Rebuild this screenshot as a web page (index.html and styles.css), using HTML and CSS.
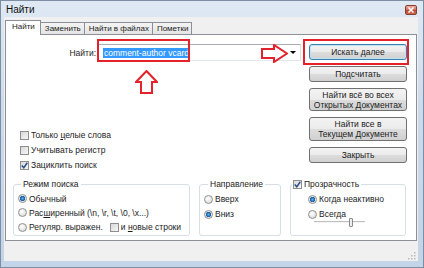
FILE: index.html
```html
<!DOCTYPE html>
<html lang="ru">
<head>
<meta charset="utf-8">
<title>Найти</title>
<link rel="stylesheet" href="styles.css">
</head>
<body>
<div class="window">
  <div class="titlebar">
    <span class="title">Найти</span>
    <span class="close"><svg width="10" height="8" viewBox="0 0 10 8"><path d="M2.5 1.5 L7.5 6.5 M7.5 1.5 L2.5 6.5" stroke="#fff" stroke-width="1.6"/></svg></span>
  </div>
  <div class="client">
    <div class="tabs">
      <div class="tab active">Найти</div>
      <div class="tab">Заменить</div>
      <div class="tab">Найти в файлах</div>
      <div class="tab">Пометки</div>
    </div>
    <div class="page">
      <div class="top">
        <div class="left">
          <div class="findrow">
            <span class="findlabel">Найти:</span>
            <div class="combo"><span class="sel">comment-author vcard</span><span class="drop"></span></div>
          </div>
          <div class="checks">
            <div class="check"><span class="cb"></span><span>Только <u>ц</u>елые слова</span></div>
            <div class="check"><span class="cb"></span><span>Учитывать регистр</span></div>
            <div class="check"><span class="cb"><svg width="7" height="7" viewBox="0 0 7 7"><path d="M0.8 3.6 L2.8 5.8 L6.3 0.8" fill="none" stroke="#2b4f86" stroke-width="1.5"/></svg></span><span>Зациклить поиск</span></div>
          </div>
        </div>
        <div class="buttons">
          <div class="btn default">Искать далее</div>
          <div class="btn">Подсчитать</div>
          <div class="btn tall">Найти всё во всех<br>Открытых Документах</div>
          <div class="btn tall">Найти все в<br>Текущем Документе</div>
          <div class="btn">Закрыть</div>
        </div>
      </div>
      <div class="groups">
        <fieldset class="group g1">
          <legend>Режим поиска</legend>
          <div class="opt"><span class="radio on"></span><span>Обычный</span></div>
          <div class="opt"><span class="radio"></span><span>Рас<u>ш</u>иренный (\n, \r, \t, \0, \x...)</span></div>
          <div class="opt"><span class="radio"></span><span>Регуляр. выражен.</span><span class="cb nl"></span><span>и <u>н</u>овые строки</span></div>
        </fieldset>
        <fieldset class="group g2">
          <legend>Направление</legend>
          <div class="opt"><span class="radio"></span><span>Вверх</span></div>
          <div class="opt"><span class="radio on"></span><span>Вниз</span></div>
        </fieldset>
        <fieldset class="group g3">
          <legend><span class="cb"><svg width="7" height="7" viewBox="0 0 7 7"><path d="M0.8 3.6 L2.8 5.8 L6.3 0.8" fill="none" stroke="#2b4f86" stroke-width="1.5"/></svg></span><span>Прозрачность</span></legend>
          <div class="opt"><span class="radio on"></span><span>Когда неактивно</span></div>
          <div class="opt"><span class="radio"></span><span>Всегда</span></div>
          <div class="slider"><span class="track a"></span><span class="thumb"></span><span class="track b"></span></div>
        </fieldset>
      </div>
      <div class="mark box1"></div>
      <div class="mark box2"></div>
      <svg class="arrow right" width="27" height="19" viewBox="0 0 27 19"><polygon points="1,5 13,5 13,1 26,9.5 13,18 13,14 1,14" fill="none" stroke="#e3222b" stroke-width="2" stroke-linejoin="miter"/></svg>
      <svg class="arrow up" width="23" height="24" viewBox="0 0 23 24"><polygon points="11.5,1 22,12 17,12 17,23 6,23 6,12 1,12" fill="none" stroke="#e3222b" stroke-width="2"/></svg>
    </div>
    <div class="footer"><svg class="grip" width="8" height="8" viewBox="0 0 8 8"><g fill="#b9b9b9"><rect x="6" y="0" width="1.5" height="1.5"/><rect x="3" y="3" width="1.5" height="1.5"/><rect x="6" y="3" width="1.5" height="1.5"/><rect x="0" y="6" width="1.5" height="1.5"/><rect x="3" y="6" width="1.5" height="1.5"/><rect x="6" y="6" width="1.5" height="1.5"/></g></svg></div>
  </div>
</div>
</body>
</html>
```
FILE: styles.css
```css
* { box-sizing: border-box; }
html, body { margin: 0; padding: 0; }
body {
  width: 424px; height: 268px; overflow: hidden;
  font-family: "Liberation Sans", Arial, sans-serif;
  font-size: 8.5px; color: #1c1c1c; background: #fff;
}
u { text-decoration: underline; text-underline-offset: 1px; }

.window {
  width: 424px; height: 268px;
  display: flex; flex-direction: column;
  background: linear-gradient(#dfe9f4, #ccdbec 40%, #c3d4e8);
  border: 1px solid #7d8ea3;
  padding: 0 5px 6px 3px;
}
.titlebar {
  height: 16px; flex: none;
  display: flex; align-items: center; justify-content: space-between;
  padding-left: 2px;
}
.title { font-size: 10px; color: #111; }
.close {
  width: 12px; height: 10px; margin-right: 1px; margin-top: 2px;
  border: 1px solid #8d3b2e; border-radius: 2px;
  background: linear-gradient(#eab0a2, #d1705c 45%, #bd4a33 55%, #cc6a4f);
  display: flex; align-items: center; justify-content: center;
}
.close svg { display: block; }

.client {
  flex: 1;
  background: #f0f0f0;
  display: flex; flex-direction: column;
  padding: 3px 1px 0;
}
.tabs {
  height: 14px; flex: none;
  display: flex; align-items: flex-end;
  position: relative; z-index: 1;
  font-size: 8px;
}
.tab {
  height: 12px; padding: 0 3px 0 4px;
  border: 1px solid #8c8f97; border-bottom: none; border-left: none;
  background: linear-gradient(#f4f4f4, #e4e4e4);
  line-height: 11px; white-space: nowrap;
}
.tab.active {
  height: 15px; margin-bottom: -1px;
  border-left: 1px solid #8c8f97;
  background: #fff; padding: 0 5px 0 6px;
  line-height: 12px;
}

.page {
  height: 207px; flex: none;
  background: #fff;
  border: 1px solid #8c8f97;
  position: relative;
  padding: 9px 9px 4px 7px;
  display: flex; flex-direction: column;
}
.top {
  display: grid; grid-template-columns: 1fr 98px; column-gap: 8px;
  height: 128px;
}
.left { display: flex; flex-direction: column; }
.findrow { display: flex; align-items: center; height: 17px; gap: 2px; }
.findlabel { width: 83px; text-align: right; }
.combo {
  flex: 1; height: 17px;
  border: 1px solid #abadb3; border-color: #abadb3 #dbdfe6 #e3e9ef #e2e3ea;
  display: flex; align-items: center; padding: 0 4px 0 4px;
  background: #fff;
}
.sel { background: #3399ff; color: #fff; line-height: 10px; height: 10px; padding: 0 1px; }
.drop {
  margin-left: auto; width: 0; height: 0;
  border-left: 3px solid transparent; border-right: 3px solid transparent;
  border-top: 3px solid #000;
}
.checks { margin-top: 67px; display: flex; flex-direction: column; gap: 1px; padding-left: 7px; }
.check { display: flex; align-items: center; height: 14px; gap: 2px; }
.cb {
  width: 9px; height: 9px; flex: none;
  border: 1px solid #8e8f8f;
  background: linear-gradient(135deg, #d9d9d9, #f6f6f6);
  display: inline-flex; align-items: center; justify-content: center;
}
.cb svg { display: block; }

.buttons { display: flex; flex-direction: column; gap: 6px; }
.btn {
  height: 16px;
  border: 1px solid #707070; border-radius: 3px;
  background: linear-gradient(#f3f3f3 0%, #ebebeb 50%, #dddddd 51%, #d0d0d0 100%);
  display: flex; align-items: center; justify-content: center;
  text-align: center; line-height: 10px;
}
.btn.default { border-color: #3c7fb1; box-shadow: inset 0 0 0 1px #bde3f5; }
.btn.tall { height: 23px; }
.btn.tall + .btn.tall { height: 24px; }

.groups { display: flex; gap: 9px; margin-top: 6px; height: 58px; }
.group {
  margin: 0; padding: 2px 0 0 4px; min-width: 0;
  border: 1px solid #d5dfe5; border-radius: 3px;
  display: flex; flex-direction: column;
}
.group legend { padding: 0 2px; line-height: 12px; }
.g1 { width: 177px; }
.g1 legend { margin-left: 3px; }
.g2 { width: 82px; }
.g2 legend { margin-left: 4px; }
.g3 { width: 116px; padding-left: 17px; }
.g3 legend { margin-left: -16px; padding: 0 2px 0 1px; display: flex; align-items: center; gap: 2px; }
.opt { display: flex; align-items: center; height: 14px; gap: 2px; margin-bottom: 1px; white-space: nowrap; }
.radio {
  width: 9px; height: 9px; flex: none; border-radius: 50%;
  border: 1px solid #8e8f8f;
  background: radial-gradient(circle at 40% 35%, #ffffff, #d4d4d4);
}
.radio.on {
  background: radial-gradient(circle at 50% 50%, #59b0ee 0, #1b5ea6 2.4px, #e6e6e6 3px, #fbfbfb 100%);
}
.cb.nl { margin: 0 0 0 5px; }
.slider { display: flex; align-items: center; height: 8px; margin-left: 6px; margin-top: -4px; }
.track { background: #bfbfbf; border-bottom: 1px solid #f4f4f4; height: 2px; }
.track.a { width: 35px; }
.track.b { width: 12px; }
.thumb { width: 4px; height: 9px; border: 1px solid #8a8a8a; border-radius: 1px; background: #ededed; }

.footer {
  flex: 1;
  display: flex; justify-content: flex-end; align-items: flex-end;
  padding: 0 1px 1px 0;
}
.grip { display: block; }

.mark { position: absolute; border: 2px solid #e3222b; }
.box1 { left: 91px; top: 4px; width: 93px; height: 23px; }
.box2 { left: 297px; top: 4px; width: 106px; height: 26px; }
.arrow { position: absolute; display: block; }
.arrow.right { left: 255px; top: 9px; }
.arrow.up { left: 129px; top: 35px; }
```
